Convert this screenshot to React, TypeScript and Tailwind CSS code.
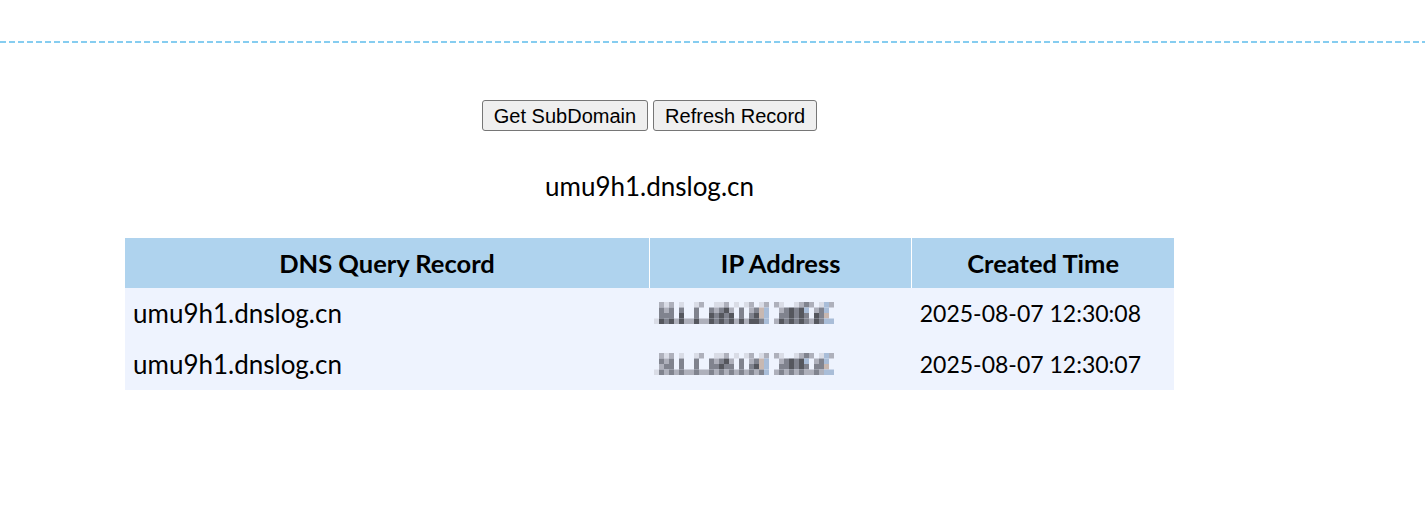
import React from 'react'

const ipMosaic = [
  [
    '.bab.a..ab..aab.a.ab.ab.ba..abcb.aeb.',
    '.cbc.c..c..cbcdb.c.bcfe..bcdcde.bce.',
    '.ccc.d..c..dcdcd.c.cdfe..ccdcdc.dcf.',
    'adcdbdbbdbbdcdcdbdbddce.bdcdcdcbdcee',
  ],
  [
    '.bab.a..ab..aab.a.ab.ab.ba..abcb.aeb.',
    '.cbc.c..c..cbcdb.c.bcfe..bcdcde.bce.',
    '.bcc.c..c..ccdcc.c.cdfe..ccdcdc.ccf.',
    'acbcbcbbcbbcbcbcbcbcbce.bcbcbcbbcbee',
  ],
]

const tone: Record<string, string> = {
  '.': '#eef2fd',
  a: '#d9dce6',
  b: '#aeb0bb',
  c: '#80838e',
  d: '#55575e',
  e: '#a9bdd8',
  f: '#c8b8b1',
}

function BlurredIp({ rows }: { rows: string[] }) {
  const size = 5
  return (
    <svg width={190} height={22} viewBox="0 0 190 22" className="block">
      {rows.map((row, y) =>
        row.split('').map((ch, x) =>
          ch === '.' ? null : (
            <rect key={`${x}-${y}`} x={x * size} y={y * 5.5} width={size} height={5.5} fill={tone[ch]} />
          )
        )
      )}
    </svg>
  )
}

const records = [
  { domain: 'umu9h1.dnslog.cn', time: '2025-08-07 12:30:08' },
  { domain: 'umu9h1.dnslog.cn', time: '2025-08-07 12:30:07' },
]

export default function App() {
  return (
    <div className="min-h-[532px] bg-white text-black">
      <div className="h-[41px]" />
      <div className="h-[2px] bg-[repeating-linear-gradient(90deg,#86cdf0_0_6px,transparent_6px_9px)]" />

      <div className="w-[1299px] flex flex-col items-center">
        {/* actions */}
        <div className="mt-[57px] flex gap-[5px] font-['Liberation_Sans',Arial,sans-serif] text-[20px]">
          <button className="h-[31px] px-[11px] rounded-[3px] border border-[#767676] bg-[#efefef] leading-none">
            Get SubDomain
          </button>
          <button className="h-[31px] px-[11px] rounded-[3px] border border-[#767676] bg-[#efefef] leading-none">
            Refresh Record
          </button>
        </div>

        <p className="mt-[40px] font-['Lato',sans-serif] text-[26px] leading-[30px]">umu9h1.dnslog.cn</p>

        {/* records */}
        <table className="mt-[36px] w-[1049px] table-fixed border-collapse border-t border-white font-['Lato',sans-serif] text-[26px] whitespace-nowrap">
          <thead>
            <tr className="h-[50px] bg-[#afd3ee] text-[25.5px]">
              <th className="w-1/2 border-r border-white font-bold">DNS Query Record</th>
              <th className="w-1/4 border-r border-white font-bold">IP Address</th>
              <th className="w-1/4 font-bold">Created Time</th>
            </tr>
          </thead>
          <tbody>
            {records.map((r, i) => (
              <tr key={i} className="h-[51px] bg-[#eef3fe]">
                <td className="px-2 text-left">{r.domain}</td>
                <td className="px-[4px]">
                  <BlurredIp rows={ipMosaic[i]} />
                </td>
                <td className="px-2 text-left text-[23px]">{r.time}</td>
              </tr>
            ))}
          </tbody>
        </table>
      </div>
    </div>
  )
}
